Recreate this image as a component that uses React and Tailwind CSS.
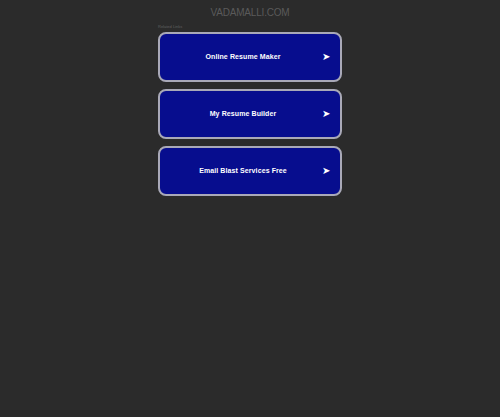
const links = ["Online Resume Maker", "My Resume Builder", "Email Blast Services Free"];

export default function App() {
  return (
    <div className="min-h-[417px] w-full bg-[#2b2b2b] font-['Liberation_Sans',Arial,sans-serif]">
      <div className="flex flex-col items-center pt-[6px]">
        <h1 className="text-[10px] leading-[13px] tracking-[-0.2px] text-[#5a5a5a]">VADAMALLI.COM</h1>
        <div className="mt-[5px] w-[184px]">
          <div className="text-[4px] leading-[5px] text-[#606060]">Related Links</div>
          <div className="mt-[3px] flex flex-col gap-[7px]">
            {links.map((label) => (
              <a
                key={label}
                href="#"
                className="flex h-[50px] items-center rounded-[8px] border-2 border-[#a9a9b8] bg-[#070d8e] text-white"
              >
                <span className="flex-1 pl-[4px] text-center text-[7px] tracking-[0.1px] font-bold">{label}</span>
                <span className="w-[18px] pr-[4px] text-[10px] leading-none">➤</span>
              </a>
            ))}
          </div>
        </div>
      </div>
    </div>
  );
}
